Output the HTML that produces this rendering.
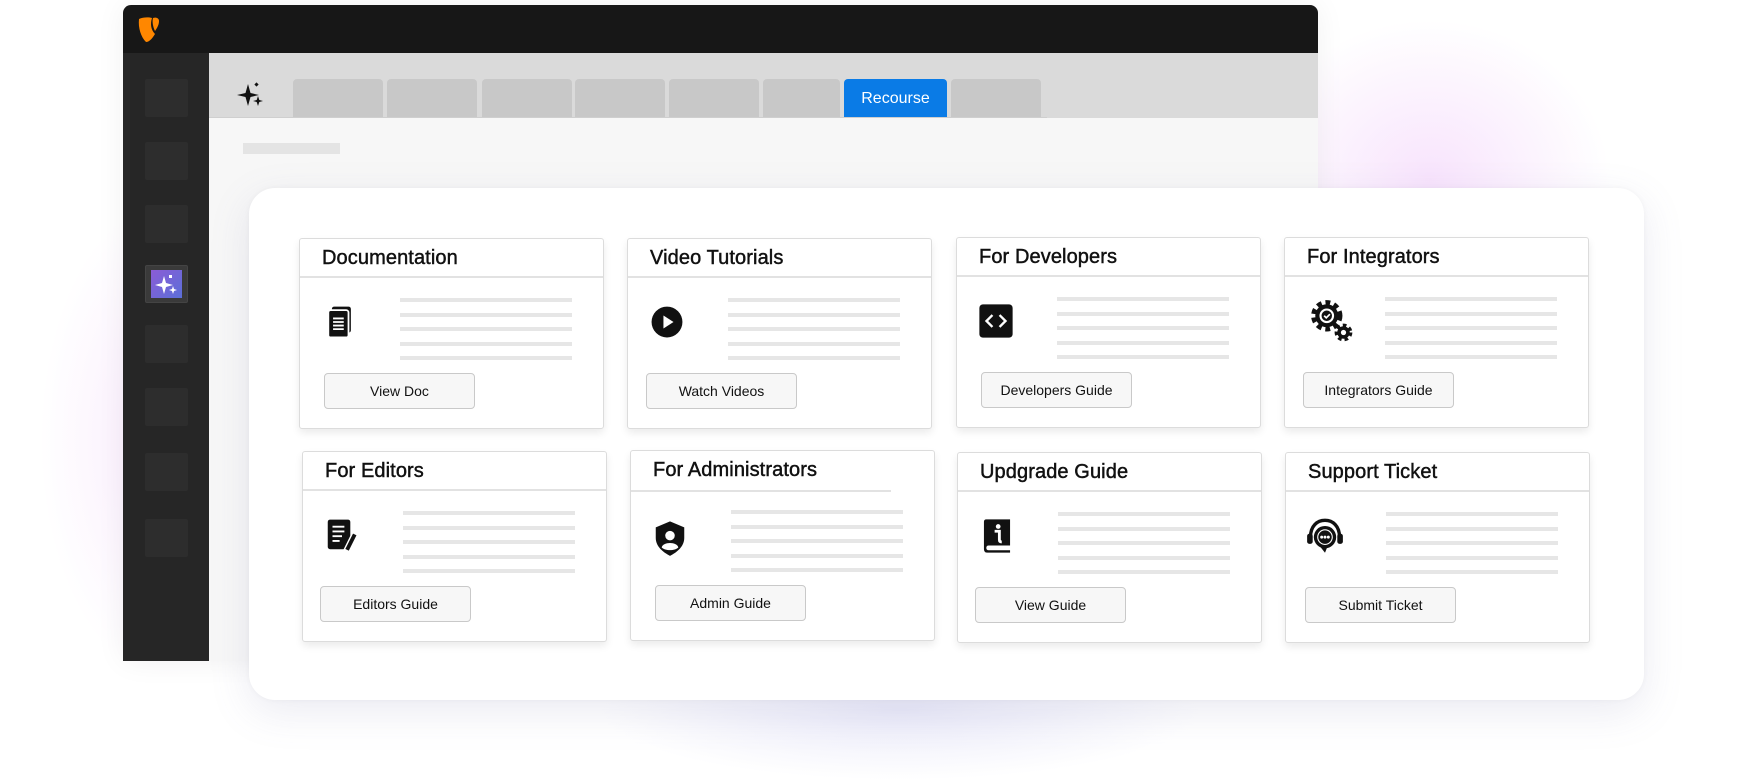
<!DOCTYPE html>
<html><head><meta charset="utf-8"><style>
*{margin:0;padding:0;box-sizing:border-box}
body{width:1755px;height:781px;background:#fff;position:relative;overflow:hidden;font-family:"Liberation Sans",sans-serif}
.glow1{position:absolute;left:1250px;top:20px;width:360px;height:320px;border-radius:50%;background:radial-gradient(closest-side,rgba(240,200,250,.5),rgba(255,255,255,0));}
.glow2{position:absolute;left:40px;top:200px;width:260px;height:480px;border-radius:50%;background:radial-gradient(closest-side,rgba(245,220,252,.6),rgba(255,255,255,0));}
.glow3{position:absolute;left:600px;top:640px;width:600px;height:140px;border-radius:50%;background:radial-gradient(closest-side,rgba(220,220,245,.6),rgba(255,255,255,0));}
.win{position:absolute;left:123px;top:5px;width:1195px;height:656px;background:#f7f7f7;border-radius:8px 8px 0 0;overflow:hidden;box-shadow:0 0 30px rgba(0,0,0,.06)}
.top{position:absolute;left:0;top:0;width:100%;height:48px;background:#171717}
.side{position:absolute;left:0;top:48px;width:86px;height:612px;background:#262626}
.sq{position:absolute;left:22px;width:43px;height:38px;background:#2d2d2d;border-radius:2px}
.tabbar{position:absolute;left:86px;top:48px;right:0;height:65px;background:#dadada}
.tab{position:absolute;top:26px;height:39px;background:#c8c8c8;border-radius:4px 4px 0 0}
.wcard{position:absolute;left:249px;top:188px;width:1395px;height:512px;background:#fff;border-radius:26px;box-shadow:0 12px 40px rgba(120,120,170,.15),0 0 6px rgba(0,0,0,.04)}
.c{position:absolute;width:305px;height:191px;background:#fff;border:1px solid #dcdcdc;border-radius:3px;box-shadow:0 4px 8px rgba(0,0,0,.08)}
.c h3{height:39px;border-bottom:2px solid #e2e2e2;font-size:20px;font-weight:normal;color:#111;-webkit-text-stroke:.45px #111;padding:8px 0 0 22px;letter-spacing:.1px}
.ic{position:absolute;left:20px;top:64px;width:38px;height:38px}
.ln{position:absolute;left:100px;width:172px;height:4px;background:#e6e6e6}
.btn{position:absolute;left:24px;top:134px;width:151px;height:36px;border:1px solid #c9c9c9;border-radius:4px;background:#f7f7f7;font-size:14px;color:#111;text-align:center;line-height:34px}
</style></head><body>
<div class="glow1"></div><div class="glow2"></div><div class="glow3"></div>
<div class="win">
 <div class="top">
  <svg style="position:absolute;left:14px;top:11px" width="24" height="28" viewBox="0 0 24 28"><path d="M2 3 C6 1 12 1 15 2 C13 8 14 14 18 18 C15 23 12 26 9 26 C4 21 1 12 2 3Z" fill="#ff8700"/><path d="M16 2 C19 1 22 2 22 5 C22 9 20 12 18 15 C16 11 15 6 16 2Z" fill="#ff8700"/></svg>
 </div>
 <div class="side">
  <div class="sq" style="top:26px"></div><div class="sq" style="top:89px"></div><div class="sq" style="top:152px"></div>
  <div class="sq" style="top:212px;background:#3a3a3a;border:1px solid #444"><div style="position:absolute;left:5px;top:4px;width:31px;height:28px;background:linear-gradient(135deg,#8b5cd6,#5b6fd8)"></div><svg style="position:absolute;left:8px;top:6px" width="26" height="24" viewBox="0 0 26 24"><path d="M10 4 L12 11 L19 13 L12 15 L10 22 L8 15 L1 13 L8 11Z" fill="#fff"/><rect x="15" y="3" width="3" height="3" fill="#fff"/><path d="M19 14 L20 17 L23 18 L20 19 L19 22 L18 19 L15 18 L18 17Z" fill="#fff"/></svg></div>
  <div class="sq" style="top:272px"></div><div class="sq" style="top:335px"></div><div class="sq" style="top:400px"></div><div class="sq" style="top:466px"></div>
 </div>
 <div class="tabbar">
  <svg style="position:absolute;left:28px;top:28px" width="28" height="26" viewBox="0 0 28 26"><path d="M11 3 L13.5 12 L22 14 L13.5 16 L11 25 L8.5 16 L0 14 L8.5 12Z" fill="#111"/><rect x="18" y="2" width="3" height="3" fill="#111" transform="rotate(45 19.5 3.5)"/><path d="M21 15 L22.3 19 L26 20 L22.3 21 L21 25 L19.7 21 L16 20 L19.7 19Z" fill="#111"/></svg>
  <div class="tab" style="left:84px;width:90px"></div>
  <div class="tab" style="left:178px;width:90px"></div>
  <div class="tab" style="left:273px;width:90px"></div>
  <div class="tab" style="left:366px;width:90px"></div>
  <div class="tab" style="left:460px;width:90px"></div>
  <div class="tab" style="left:554px;width:77px"></div>
  <div class="tab" style="left:635px;width:103px;background:#0a7be6;color:#fff;font-size:16px;text-align:center;line-height:39px">Recourse</div>
  <div class="tab" style="left:742px;width:90px"></div>
  <div style="position:absolute;left:0;top:64px;width:838px;height:1px;background:#cfcfcf"></div>
 </div>
 <div style="position:absolute;left:120px;top:138px;width:97px;height:11px;background:#e4e4e4"></div>
</div>
<div class="wcard"></div>

<div class="c" style="left:299px;top:238px"><h3>Documentation</h3>
 <svg class="ic" viewBox="0 0 32 32"><rect x="10" y="3" width="16" height="22" rx="2" fill="#111"/><rect x="7" y="6" width="17" height="23" rx="2" fill="#111" stroke="#fff" stroke-width="1.5"/><path d="M11 13h9M11 16h9M11 19h9M11 22h9" stroke="#fff" stroke-width="1.5"/></svg>
 <div class="ln" style="top:59px"></div><div class="ln" style="top:74px"></div><div class="ln" style="top:88px"></div><div class="ln" style="top:103px"></div><div class="ln" style="top:117px"></div>
 <div class="btn">View Doc</div></div>

<div class="c" style="left:627px;top:238px"><h3>Video Tutorials</h3>
 <svg class="ic" viewBox="0 0 32 32"><circle cx="16" cy="16" r="13" fill="#111"/><path d="M13 10.5 L21.5 16 L13 21.5Z" fill="#fff"/></svg>
 <div class="ln" style="top:59px"></div><div class="ln" style="top:74px"></div><div class="ln" style="top:88px"></div><div class="ln" style="top:103px"></div><div class="ln" style="top:117px"></div>
 <div class="btn" style="left:18px">Watch Videos</div></div>

<div class="c" style="left:956px;top:237px"><h3>For Developers</h3>
 <svg class="ic" viewBox="0 0 32 32"><rect x="2" y="2" width="28" height="28" rx="3" fill="#111"/><path d="M13 11 L8 16 L13 21 M19 11 L24 16 L19 21" stroke="#fff" stroke-width="2" fill="none"/></svg>
 <div class="ln" style="top:59px"></div><div class="ln" style="top:74px"></div><div class="ln" style="top:88px"></div><div class="ln" style="top:103px"></div><div class="ln" style="top:117px"></div>
 <div class="btn" style="left:24px">Developers Guide</div></div>

<div class="c" style="left:1284px;top:237px"><h3>For Integrators</h3>
 <svg class="ic" viewBox="0 0 44 44" style="width:46px;height:46px;left:24px;top:60px"><circle cx="17" cy="17" r="11" fill="none" stroke="#111" stroke-width="8" stroke-dasharray="4 3.2"/><circle cx="17" cy="17" r="11" fill="#111"/><circle cx="17" cy="17" r="7" fill="#fff"/><circle cx="17" cy="17" r="5" fill="#111"/><path d="M14.5 17l2 2 3.5-3.5" stroke="#fff" stroke-width="1.6" fill="none"/><circle cx="33" cy="33" r="6" fill="none" stroke="#111" stroke-width="5" stroke-dasharray="3 2.5"/><circle cx="33" cy="33" r="6" fill="#111"/><circle cx="33" cy="33" r="2.5" fill="#fff"/></svg>
 <div class="ln" style="top:59px"></div><div class="ln" style="top:74px"></div><div class="ln" style="top:88px"></div><div class="ln" style="top:103px"></div><div class="ln" style="top:117px"></div>
 <div class="btn" style="left:18px">Integrators Guide</div></div>

<div class="c" style="left:302px;top:451px"><h3>For Editors</h3>
 <svg class="ic" viewBox="0 0 32 32"><rect x="4" y="3" width="19" height="25" rx="2" fill="#111"/><path d="M8 9h10M8 13h10M8 17h8M8 21h6" stroke="#fff" stroke-width="1.6"/><path d="M25 14 L29 16 L22 30 L18 28Z" fill="#111" stroke="#fff" stroke-width="1.2"/></svg>
 <div class="ln" style="top:59px"></div><div class="ln" style="top:74px"></div><div class="ln" style="top:88px"></div><div class="ln" style="top:103px"></div><div class="ln" style="top:117px"></div>
 <div class="btn" style="left:17px">Editors Guide</div></div>

<div class="c" style="left:630px;top:450px"><h3 style="border-bottom:none">For Administrators</h3>
 <div style="position:absolute;left:0;top:39px;width:260px;height:2px;background:#e2e2e2"></div>
 <svg class="ic" viewBox="0 0 32 32" style="top:68px"><path d="M16 2 L28 7 V16 C28 23 22 28 16 31 C10 28 4 23 4 16 V7Z" fill="#111"/><circle cx="16" cy="14" r="4" fill="#fff"/><path d="M9 24 C10 19 22 19 23 24 C20 27 12 27 9 24Z" fill="#fff"/></svg>
 <div class="ln" style="top:59px"></div><div class="ln" style="top:74px"></div><div class="ln" style="top:88px"></div><div class="ln" style="top:103px"></div><div class="ln" style="top:117px"></div>
 <div class="btn" style="left:24px">Admin Guide</div></div>

<div class="c" style="left:957px;top:452px"><h3>Updgrade Guide</h3>
 <svg class="ic" viewBox="0 0 32 32"><path d="M5 4 Q5 2 7 2 H27 V24 H9 Q7 24 7 26 Q7 28 9 28 H27 V30 H8 Q5 30 5 27Z" fill="#111"/><circle cx="17" cy="8" r="2" fill="#fff"/><path d="M14 12h4v7q0 2 2 2" stroke="#fff" stroke-width="2.4" fill="none"/></svg>
 <div class="ln" style="top:59px"></div><div class="ln" style="top:74px"></div><div class="ln" style="top:88px"></div><div class="ln" style="top:103px"></div><div class="ln" style="top:117px"></div>
 <div class="btn" style="left:17px">View Guide</div></div>

<div class="c" style="left:1285px;top:452px"><h3>Support Ticket</h3>
 <svg class="ic" viewBox="0 0 34 34"><path d="M4 18 C4 8 10 3 17 3 C24 3 30 8 30 18" stroke="#111" stroke-width="3" fill="none"/><rect x="1" y="15" width="5" height="9" rx="2" fill="#111"/><rect x="28" y="15" width="5" height="9" rx="2" fill="#111"/><circle cx="17" cy="18" r="10" fill="#111"/><circle cx="17" cy="18" r="7" fill="#fff"/><circle cx="17" cy="18" r="6" fill="#111"/><circle cx="14" cy="18" r="1.3" fill="#fff"/><circle cx="17" cy="18" r="1.3" fill="#fff"/><circle cx="20" cy="18" r="1.3" fill="#fff"/><path d="M13 27 L17 32 L19 27" fill="#111"/></svg>
 <div class="ln" style="top:59px"></div><div class="ln" style="top:74px"></div><div class="ln" style="top:88px"></div><div class="ln" style="top:103px"></div><div class="ln" style="top:117px"></div>
 <div class="btn" style="left:19px">Submit Ticket</div></div>
</body></html>
